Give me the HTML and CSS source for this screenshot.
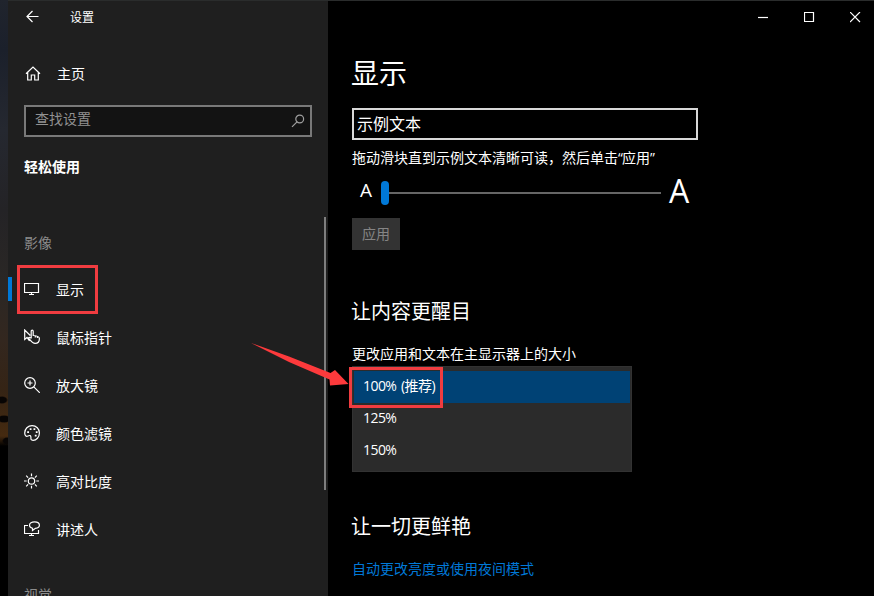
FILE: index.html
```
<!DOCTYPE html>
<html lang="zh-CN">
<head>
  <meta charset="UTF-8">
  <title>设置</title>
  <link rel="stylesheet" href="styles.css">
</head>
<body>
  <div class="desktop">
    <div class="window">
      <aside class="sidebar">
        <div class="titlebar">
          <svg class="back" width="14" height="14" viewBox="0 0 14 14"><path d="M12.500 6.500H1M6.500 1L1 6.500 6.500 12"/></svg>
          <span>设置</span>
        </div>

        <a class="home">
          <svg class="icon" width="16" height="16" viewBox="0 0 16 16"><path d="M1 7.700L8 1l7 6.700M2.700 6.300V14h3.600V9h3.400v5h3.600V6.300"/></svg>
          <span>主页</span>
        </a>

        <div class="search">
          <span>查找设置</span>
          <svg width="14" height="14" viewBox="0 0 14 14"><circle cx="8.700" cy="5" r="3.900"/><path d="M6 7.800L1 12.800"/></svg>
        </div>

        <h2 class="category">轻松使用</h2>

        <nav class="nav">
          <h3 class="group">影像</h3>
          <a class="item active">
            <svg class="icon" width="16" height="16" viewBox="0 0 16 16"><path d="M.5 2.500h14v9H.5zM7.500 11.500v2M5 13.500h5"/></svg>
            <span>显示</span>
            <i class="mark mark-item"></i>
          </a>
          <a class="item">
            <svg class="icon" width="16" height="16" viewBox="0 0 16 16"><path d="M6.300 6.500L.7 1v9.500l2.300-2 2.500 3.500M7.200 9.500V2.200c0-1.500 2-1.500 2 0v4.300c2 .2 6.200.5 6.200 2.900 0 3-1.300 5-4.300 5-2.800 0-3.900-2.200-6.700-5.500 1-1 2.300-.2 2.800.6M11.300 6.500v2M13.400 7v2"/></svg>
            <span>鼠标指针</span>
          </a>
          <a class="item">
            <svg class="icon" width="16" height="16" viewBox="0 0 16 16"><circle cx="6" cy="6" r="5.300"/><path d="M9.800 9.800l6 6M6 3.500v5M3.500 6h5"/></svg>
            <span>放大镜</span>
          </a>
          <a class="item">
            <svg class="icon" width="16" height="16" viewBox="0 0 16 16"><path d="M.7 8C.7 3.800 4 .7 8.100.7s7.300 3.100 7.300 7.300-3.100 7.300-6.300 7.300c-4 0-.9-3.800-2.900-4.700-1.900-.7-2.700 1.600-4.300.5C1.100 10.400.7 9.300.7 8z"/><path class="dots" d="M3.200 6.200H5v1.800H3.200zM5.700 3.200h1.800V5H5.700zM9.500 3.200h1.800V5H9.500zM11.800 6.200h1.800v1.800h-1.800zM10.800 9.800h1.800v1.800h-1.800z"/></svg>
            <span>颜色滤镜</span>
          </a>
          <a class="item">
            <svg class="icon" width="16" height="16" viewBox="0 0 16 16"><circle cx="7.500" cy="8" r="3.200"/><path d="M7.500.5v2.700M7.500 12.800v2.700M0 8h2.700M12.300 8H15M2.200 2.700l1.900 1.900M10.900 11.400l1.900 1.900M12.800 2.700l-1.900 1.900M4.100 11.400l-1.900 1.900"/></svg>
            <span>高对比度</span>
          </a>
          <a class="item">
            <svg class="icon" width="16" height="16" viewBox="0 0 16 16"><path d="M4 4.500H.5v8h14V9M7.500 12.500v2M5 14.500h5M8.500 9.500V7.200C6.500 6.600 5.500 5.500 5.500 4.200 5.500 2.300 7.700.9 10.500.9s4.900 1.400 4.900 3.300c0 1.700-1.600 2.900-4 3.100z"/></svg>
            <span>讲述人</span>
          </a>
          <h3 class="group group-next">视觉</h3>
          <div class="scrollbar"></div>
        </nav>
      </aside>

      <main class="content">
        <div class="controls">
          <button><svg width="11" height="11" viewBox="0 0 11 11"><path d="M0 5.500h10"/></svg></button>
          <button><svg width="11" height="11" viewBox="0 0 11 11"><path d="M.5.5h9v9h-9z"/></svg></button>
          <button><svg width="11" height="11" viewBox="0 0 11 11"><path d="M0 0l10 10M10 0L0 10"/></svg></button>
        </div>

        <div class="page">
          <h1>显示</h1>
          <div class="sample">示例文本</div>
          <p class="hint">拖动滑块直到示例文本清晰可读，然后单击<span class="quote">“</span>应用<span class="quote">”</span></p>
          <div class="slider">
            <span class="small-a">A</span>
            <div class="thumb"></div>
            <div class="track"></div>
            <span class="big-a">A</span>
          </div>
          <button class="apply">应用</button>

          <h2>让内容更醒目</h2>
          <p class="label">更改应用和文本在主显示器上的大小</p>
          <ul class="dropdown">
            <li class="selected">100% (推荐)<i class="mark mark-option"></i></li>
            <li>125%</li>
            <li>150%</li>
          </ul>

          <h2 class="vivid">让一切更鲜艳</h2>
          <a class="link">自动更改亮度或使用夜间模式</a>
        </div>
      </main>
    </div>

    <svg class="arrow" width="100" height="46" viewBox="0 0 100 46"><path d="M0 1L38 14.500 79.500 31 84 28l13.500 14-18.500 1.500-.5-6L38 20z"/></svg>
  </div>
</body>
</html>
```
FILE: styles.css
```
* {
  box-sizing: border-box;
  margin: 0;
  padding: 0;
}

body {
  font-family: "Open Sans", "Noto Sans CJK SC", sans-serif;
  font-size: 14px;
  color: #fff;
  background: #000;
  overflow: hidden;
}

svg {
  fill: none;
  stroke: #fff;
  stroke-width: 1.2;
  flex: none;
}

button {
  border: none;
  background: none;
  color: inherit;
  font: inherit;
}

.desktop {
  position: relative;
  width: 874px;
  height: 596px;
  padding-left: 8px;
  overflow: hidden;
  background:
    radial-gradient(ellipse 6px 4px at 2px 400px, #080504 70%, transparent),
    radial-gradient(ellipse 8px 4px at 4px 419px, #080504 70%, transparent),
    radial-gradient(ellipse 5px 4px at 7px 441px, #080504 70%, transparent),
    linear-gradient(#20242d 0, #1b202b 50px, #252830 130px, #242326 210px, #2a2725 280px, #33271f 340px, #352415 390px, #452a10 436px, #000 446px);
}

.window {
  display: flex;
  height: 596px;
  border-top: 1px solid #2a2c2c;
}

/* left panel */
.sidebar {
  display: flex;
  flex-direction: column;
  width: 320px;
  height: 595px;
  background: #1f1f1f;
}

.titlebar {
  display: flex;
  align-items: center;
  gap: 30px;
  height: 32px;
  padding-left: 18px;
  font-size: 12px;
}

.home {
  display: flex;
  align-items: center;
  gap: 16px;
  height: 48px;
  margin-top: 16px;
  padding-left: 17px;
}

.home .icon {
  margin-top: 1px;
}

.search {
  display: flex;
  align-items: center;
  justify-content: space-between;
  height: 32px;
  margin: 8px 16px 0;
  padding: 0 5px 2px 9px;
  border: 2px solid #797979;
  background: #131313;
  color: #919191;
  line-height: 26px;
}

.search span {
  margin-top: -2px;
}

.search svg {
  margin-top: 2px;
  stroke: #a0a0a0;
}

.category {
  height: 30px;
  margin: 15px 16px 0;
  font-size: 14px;
  line-height: 30px;
}

.nav {
  position: relative;
  flex: 1;
  margin-top: 35px;
  padding-top: 11px;
  overflow: hidden;
}

.group {
  height: 30px;
  padding-left: 16px;
  margin-bottom: 8px;
  font-size: 14px;
  font-weight: 400;
  line-height: 30px;
  color: #8c8c8c;
}

.group-next {
  margin-top: 26px;
}

.item {
  position: relative;
  display: flex;
  align-items: center;
  gap: 16px;
  height: 48px;
  padding: 0 0 2px 16px;
}

.item .icon {
  margin-top: -1px;
}

.item.active::before {
  content: "";
  position: absolute;
  left: 0;
  top: 11px;
  width: 4px;
  height: 24px;
  background: #0078d7;
}

.icon .dots {
  fill: #fff;
  stroke: none;
}

.scrollbar {
  position: absolute;
  top: 0;
  left: 316px;
  width: 2px;
  height: 273px;
  background: #7e7e7e;
}

/* right panel */
.content {
  flex: 1;
  height: 595px;
  background: #000;
}

.controls {
  display: flex;
  justify-content: flex-end;
  height: 32px;
  margin-right: -4px;
}

.controls button {
  display: flex;
  align-items: center;
  justify-content: center;
  width: 46px;
}

.page {
  display: flex;
  flex-direction: column;
  align-items: flex-start;
  padding: 19px 24px 0;
}

h1 {
  height: 42px;
  margin-left: -1px;
  font-size: 28px;
  font-weight: 400;
  line-height: 42px;
}

.sample {
  width: 346px;
  height: 32px;
  margin-top: 14px;
  padding-left: 3px;
  border: 2px solid #d8d8d8;
  font-size: 16px;
  line-height: 29px;
}

.hint {
  height: 24px;
  margin-top: 6px;
  line-height: 24px;
}

.quote {
  letter-spacing: -0.9px;
}

.slider {
  display: flex;
  align-items: center;
  height: 40px;
  margin-top: 3px;
}

.small-a {
  width: 21px;
  margin-left: 8px;
  font-size: 19px;
  line-height: 36px;
  padding-bottom: 6px;
}

.thumb {
  width: 8px;
  height: 24px;
  border-radius: 4px;
  background: #0078d7;
}

.track {
  width: 272px;
  height: 2px;
  background: #666;
}

.big-a {
  margin-left: 8px;
  font-size: 32px;
  line-height: 40px;
  padding-bottom: 5px;
}

.apply {
  width: 48px;
  height: 32px;
  margin-top: 5px;
  background: #333;
  color: #858585;
  line-height: 32px;
}

.page h2 {
  height: 30px;
  margin-top: 47px;
  margin-left: -1px;
  font-size: 20px;
  font-weight: 400;
  line-height: 30px;
}

.label {
  height: 24px;
  margin-top: 15px;
  line-height: 24px;
}

.dropdown {
  width: 280px;
  height: 106px;
  padding: 4px 1px;
  border: 1px solid #323232;
  background: #2b2b2b;
  list-style: none;
}

.dropdown li {
  position: relative;
  height: 32px;
  padding-left: 9px;
  letter-spacing: -0.55px;
  word-spacing: 1.5px;
  line-height: 29px;
}

.dropdown .selected {
  background: #004275;
}

.page .vivid {
  margin-top: 40px;
}

.link {
  height: 24px;
  margin-top: 15px;
  line-height: 24px;
  color: #0078d7;
}

/* red highlights */
.mark {
  position: absolute;
  border: 3px solid #f03c40;
}

.mark-item {
  left: 9px;
  top: -1px;
  width: 81px;
  height: 49px;
}

.mark-option {
  left: -5px;
  top: -4px;
  width: 94px;
  height: 41px;
}

.arrow {
  position: absolute;
  left: 251px;
  top: 342px;
  fill: #fd3a3c;
  stroke: none;
}
```
